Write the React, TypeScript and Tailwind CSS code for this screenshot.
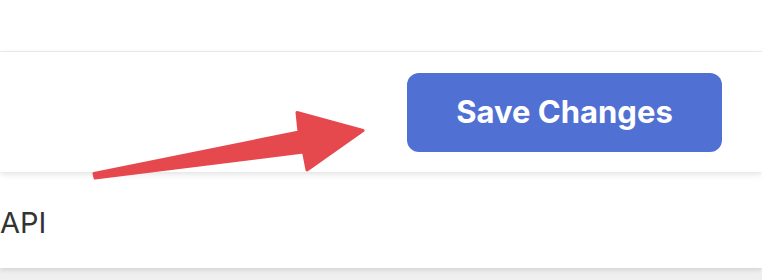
export default function App() {
  return (
    <div className="relative w-[762px] h-[280px] overflow-hidden bg-[#efefef] font-['Inter',sans-serif]">
      {/* top strip */}
      <div className="h-[52px] bg-white border-b border-[#eeeeee]" />

      {/* action bar */}
      <div className="relative z-10 h-[120px] bg-white flex items-center justify-end pr-[40px] shadow-[0_2px_6px_rgba(0,0,0,0.12)]">
        <button className="w-[315px] h-[79px] rounded-[12px] bg-[#5170d3] text-white text-[31px] font-bold">
          Save Changes
        </button>
      </div>

      {/* next card */}
      <div className="h-[96px] bg-white flex items-center pt-[6px] shadow-[0_2px_5px_rgba(0,0,0,0.12)]">
        <span className="text-[29px] text-[#333333]">API</span>
      </div>

      {/* annotation arrow */}
      <svg className="absolute left-0 top-0 z-20 pointer-events-none" width="762" height="280" viewBox="0 0 762 280">
        <path
          d="M94 173.5 L299 132 L297 112.5 L363 130.5 L307 170 L303.5 152 L95 178 Z"
          fill="#e5484d"
          stroke="#e5484d"
          strokeWidth="3"
          strokeLinejoin="round"
        />
      </svg>
    </div>
  )
}
